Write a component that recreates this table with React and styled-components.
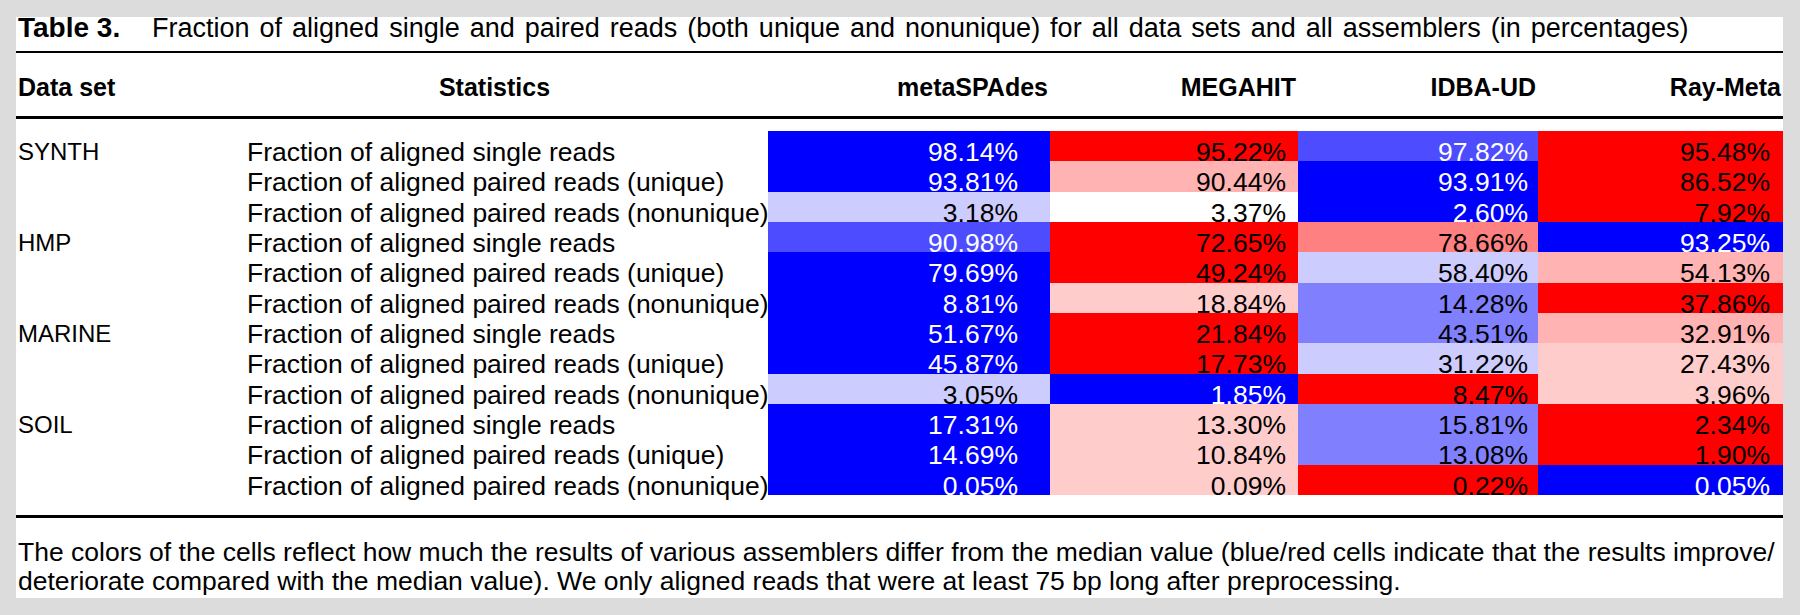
import React from 'react';
import styled, { createGlobalStyle } from 'styled-components';

const GlobalStyle = createGlobalStyle`
    body {
        margin: 0;
        background: #dcdcdc;
        font-family: 'Liberation Sans', Arial, sans-serif;
        color: #000;
    }
`;

const COLORS = {
    B: '#0000ff',
    B2: '#4d4dff',
    B3: '#8080ff',
    B4: '#ccccff',
    R: '#ff0000',
    R2: '#ff8080',
    R3: '#ffb3b3',
    R4: '#ffcccc',
    W: '#ffffff'
};

const LIGHT_TEXT = ['B', 'B2'];

const ASSEMBLERS = [
    { name: 'metaSPAdes', pad: 32 },
    { name: 'MEGAHIT', pad: 12 },
    { name: 'IDBA-UD', pad: 10 },
    { name: 'Ray-Meta', pad: 13 }
];

const STATS = [
    'Fraction of aligned single reads',
    'Fraction of aligned paired reads (unique)',
    'Fraction of aligned paired reads (nonunique)'
];

const DATA = [
    {
        name: 'SYNTH',
        rows: [
            [['98.14%', 'B'], ['95.22%', 'R'], ['97.82%', 'B2'], ['95.48%', 'R']],
            [['93.81%', 'B'], ['90.44%', 'R3'], ['93.91%', 'B'], ['86.52%', 'R']],
            [['3.18%', 'B4'], ['3.37%', 'W'], ['2.60%', 'B'], ['7.92%', 'R']]
        ]
    },
    {
        name: 'HMP',
        rows: [
            [['90.98%', 'B2'], ['72.65%', 'R'], ['78.66%', 'R2'], ['93.25%', 'B']],
            [['79.69%', 'B'], ['49.24%', 'R'], ['58.40%', 'B4'], ['54.13%', 'R3']],
            [['8.81%', 'B'], ['18.84%', 'R4'], ['14.28%', 'B3'], ['37.86%', 'R']]
        ]
    },
    {
        name: 'MARINE',
        rows: [
            [['51.67%', 'B'], ['21.84%', 'R'], ['43.51%', 'B3'], ['32.91%', 'R3']],
            [['45.87%', 'B'], ['17.73%', 'R'], ['31.22%', 'B4'], ['27.43%', 'R4']],
            [['3.05%', 'B4'], ['1.85%', 'B'], ['8.47%', 'R'], ['3.96%', 'R4']]
        ]
    },
    {
        name: 'SOIL',
        rows: [
            [['17.31%', 'B'], ['13.30%', 'R4'], ['15.81%', 'B3'], ['2.34%', 'R']],
            [['14.69%', 'B'], ['10.84%', 'R4'], ['13.08%', 'B3'], ['1.90%', 'R']],
            [['0.05%', 'B'], ['0.09%', 'R4'], ['0.22%', 'R'], ['0.05%', 'B']]
        ]
    }
];

const App = () => {
    return (
        <>
            <GlobalStyle />
            <Panel>
                <Title>
                    <TitleLabel>Table 3.</TitleLabel>
                    <TitleText>
                        Fraction of aligned single and paired reads (both unique and nonunique) for all data sets and all assemblers (in percentages)
                    </TitleText>
                </Title>
                <Rule />
                <HeaderRow>
                    <HeadCell>Data set</HeadCell>
                    <HeadCell center>Statistics</HeadCell>
                    {ASSEMBLERS.map((a) => (
                        <HeadCell key={a.name} right>
                            {a.name}
                        </HeadCell>
                    ))}
                </HeaderRow>
                <Rule thick />
                <Body>
                    {DATA.map((set) =>
                        set.rows.map((row, i) => (
                            <React.Fragment key={set.name + i}>
                                <DataSetCell>{i === 0 ? set.name : ''}</DataSetCell>
                                <StatCell>{STATS[i]}</StatCell>
                                {row.map(([value, tone], j) => (
                                    <ValueCell
                                        key={j}
                                        $bg={COLORS[tone]}
                                        $light={LIGHT_TEXT.includes(tone)}
                                        $pad={ASSEMBLERS[j].pad}
                                    >
                                        {value}
                                    </ValueCell>
                                ))}
                            </React.Fragment>
                        ))
                    )}
                </Body>
                <Rule thick />
                <Footnote>
                    <FootLine>
                        The colors of the cells reflect how much the results of various assemblers differ from the median value (blue/red cells indicate that the results improve/
                    </FootLine>
                    <FootLine>
                        deteriorate compared with the median value). We only aligned reads that were at least 75 bp long after preprocessing.
                    </FootLine>
                </Footnote>
            </Panel>
        </>
    );
};

export default App;

const COLUMNS = '231px 521px 282px 248px 240px 245px';

const Panel = styled.div`
    width: 1767px;
    height: 581px;
    margin: 17px 0 0 16px;
    background: #fff;
    display: flex;
    flex-direction: column;
`;

const Title = styled.div`
    height: 34px;
    line-height: 22px;
    display: flex;
    align-items: flex-start;
    padding-left: 2px;
    white-space: nowrap;
`;

const TitleLabel = styled.span`
    width: 134px;
    font-weight: bold;
    font-size: 28px;
`;

const TitleText = styled.span`
    font-size: 27px;
    word-spacing: 2.5px;
`;

const Rule = styled.div`
    height: ${(p) => (p.thick ? '3px' : '2px')};
    background: #000;
    flex-shrink: 0;
`;

const HeaderRow = styled.div`
    height: 63px;
    box-sizing: border-box;
    padding-top: 19px;
    display: grid;
    grid-template-columns: ${COLUMNS};
    line-height: 30px;
    font-size: 25px;
    font-weight: bold;
    white-space: nowrap;
`;

const HeadCell = styled.div`
    padding: ${(p) => (p.center ? '0 26px 0 0' : '0 2px')};
    text-align: ${(p) => (p.center ? 'center' : p.right ? 'right' : 'left')};
`;

const Body = styled.div`
    display: grid;
    grid-template-columns: ${COLUMNS};
    grid-auto-rows: 30.333px;
    margin: 12px 0 20px;
    font-size: 26.5px;
    line-height: 30.333px;
    white-space: nowrap;
`;

const DataSetCell = styled.div`
    padding: 6px 0 0 2px;
    font-size: 24px;
`;

const StatCell = styled.div`
    padding-top: 6px;
`;

const ValueCell = styled.div`
    padding: 6px ${(p) => p.$pad}px 0 0;
    text-align: right;
    background: ${(p) => p.$bg};
    color: ${(p) => (p.$light ? '#fff' : '#000')};
`;

const Footnote = styled.div`
    padding: 20px 0 0 2px;
    font-size: 26.5px;
    line-height: 29px;
    white-space: nowrap;
`;

const FootLine = styled.div``;
